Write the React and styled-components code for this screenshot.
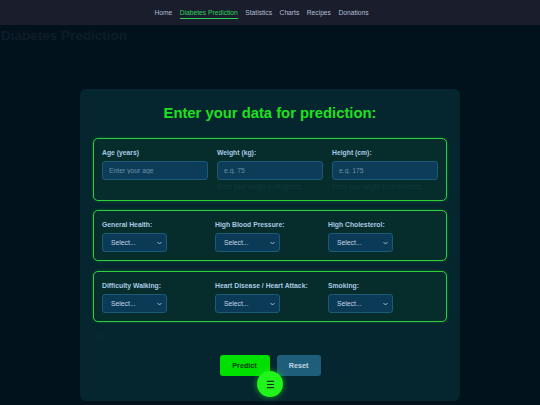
import React from "react";
import styled, { createGlobalStyle } from "styled-components";

const Global = createGlobalStyle`
  html, body { margin: 0; padding: 0; background: #02121d; }
  body { font-family: "Liberation Sans", Arial, sans-serif; width: 540px; height: 405px; overflow: hidden; }
  * { box-sizing: border-box; }
`;

const Nav = styled.nav`
  height: 25px;
  background: #1a1d2c;
  display: flex;
  justify-content: center;
  align-items: center;
  gap: 7.5px;
  padding-right: 17px;
`;

const NavLink = styled.a`
  font-size: 6.7px;
  color: ${(p) => (p.$active ? "#2bd35a" : "#b3bfd3")};
  text-decoration: none;
  padding: 2px 0 2px;
  border-bottom: 1px solid ${(p) => (p.$active ? "#2bd35a" : "transparent")};
  margin-top: 0;
`;

const PageTitle = styled.h1`
  margin: 3px 0 0 1px;
  font-size: 13.5px;
  font-weight: bold;
  color: #0e1c28;
  line-height: 16px;
`;

const Card = styled.main`
  width: 380px;
  margin: 45px auto 0;
  background: #05262f;
  border-radius: 6px;
  padding: 14px 13px 25px;
  height: 312px;
`;

const Title = styled.h2`
  margin: 0 0 15px;
  text-align: center;
  font-size: 14.8px;
  line-height: 20px;
  font-weight: bold;
  color: #1fe01f;
`;

const Section = styled.div`
  margin: 0 0 ${(p) => p.$mb}px;
  height: ${(p) => p.$h}px;
  border: 1px solid #2fcf3a;
  border-radius: 5px;
  background: #062d2c;
  box-shadow: 0 0 3px rgba(47, 207, 58, 0.35);
  padding: 9px 8px 0;
  display: grid;
  grid-template-columns: repeat(3, 106px);
  align-content: start;
  column-gap: ${(p) => p.$gap}px;
`;

const Field = styled.div`
  display: flex;
  flex-direction: column;
`;

const Label = styled.label`
  font-size: 6.8px;
  font-weight: bold;
  color: #a9c9e2;
  line-height: 9px;
  margin-bottom: 4px;
  white-space: nowrap;
`;

const Input = styled.input`
  width: 106px;
  height: 19px;
  background: #0c3c57;
  border: 1px solid #1b5a77;
  border-radius: 3px;
  color: #c9dbe8;
  font-family: inherit;
  font-size: 6.8px;
  padding: 0 6px;
  outline: none;
  &::placeholder { color: #6e8fa6; }
`;

const Help = styled.div`
  font-size: 6.3px;
  color: #0e3a3c;
  margin-top: 3px;
  height: 8px;
  white-space: nowrap;
`;

const SelectBox = styled.div`
  position: relative;
  width: 65px;
  height: 19px;
  background: #0b3a56;
  border: 1px solid #1b5a77;
  border-radius: 3px;
  display: flex;
  align-items: center;
  padding-left: 8px;
  font-size: 6.8px;
  color: #c3d6e4;
`;

const Chevron = styled.svg`
  position: absolute;
  right: 4px;
  top: 7px;
`;

const Note = styled.div`
  margin: 11px 0 0 3px;
  font-size: 7px;
  color: #0d2a33;
  height: 9px;
`;

const Actions = styled.div`
  display: flex;
  justify-content: center;
  gap: 7px;
  margin-top: 13px;
`;

const Button = styled.button`
  height: 21px;
  width: ${(p) => p.$w}px;
  border: none;
  border-radius: 3px;
  font-family: inherit;
  font-size: 7.2px;
  font-weight: bold;
  background: ${(p) => (p.$primary ? "#00e000" : "#1f5e7a")};
  color: ${(p) => (p.$primary ? "#0b3a18" : "#c2d6e3")};
`;

const Fab = styled.div`
  position: absolute;
  left: 257px;
  top: 371px;
  width: 26px;
  height: 26px;
  border-radius: 50%;
  background: #1ff51a;
  box-shadow: 0 0 6px rgba(31, 245, 26, 0.6);
  display: flex;
  align-items: center;
  justify-content: center;
`;

function Select() {
  return (
    <SelectBox>
      Select...
      <Chevron width="5" height="4" viewBox="0 0 10 6">
        <path d="M1 1l4 4 4-4" stroke="#c3d6e4" strokeWidth="1.6" fill="none" />
      </Chevron>
    </SelectBox>
  );
}

export default function App() {
  const links = ["Home", "Diabetes Prediction", "Statistics", "Charts", "Recipes", "Donations"];
  return (
    <>
      <Global />
      <Nav>
        {links.map((l) => (
          <NavLink key={l} $active={l === "Diabetes Prediction"}>{l}</NavLink>
        ))}
      </Nav>
      <PageTitle>Diabetes Prediction</PageTitle>
      <Card>
        <Title>Enter your data for prediction:</Title>
        <Section $h={63} $gap={9} $mb={9}>
          <Field>
            <Label>Age (years)</Label>
            <Input placeholder="Enter your age" />
            <Help />
          </Field>
          <Field>
            <Label>Weight (kg):</Label>
            <Input placeholder="e.g. 75" />
            <Help>Enter your weight in kilograms</Help>
          </Field>
          <Field>
            <Label>Height (cm):</Label>
            <Input placeholder="e.g. 175" />
            <Help>Enter your height in centimeters</Help>
          </Field>
        </Section>
        <Section $h={51} $gap={7} $mb={10}>
          <Field>
            <Label>General Health:</Label>
            <Select />
          </Field>
          <Field>
            <Label>High Blood Pressure:</Label>
            <Select />
          </Field>
          <Field>
            <Label>High Cholesterol:</Label>
            <Select />
          </Field>
        </Section>
        <Section $h={51} $gap={7} $mb={0}>
          <Field>
            <Label>Difficulty Walking:</Label>
            <Select />
          </Field>
          <Field>
            <Label>Heart Disease / Heart Attack:</Label>
            <Select />
          </Field>
          <Field>
            <Label>Smoking:</Label>
            <Select />
          </Field>
        </Section>
        <Note>BMI: --</Note>
        <Actions>
          <Button $primary $w={50}>Predict</Button>
          <Button $w={44}>Reset</Button>
        </Actions>
      </Card>
      <Fab>
        <svg width="9" height="9" viewBox="0 0 10 10">
          <path d="M1 1.5h8M1 5h8M1 8.5h8" stroke="#0d3312" strokeWidth="1.3" />
        </svg>
      </Fab>
    </>
  );
}
